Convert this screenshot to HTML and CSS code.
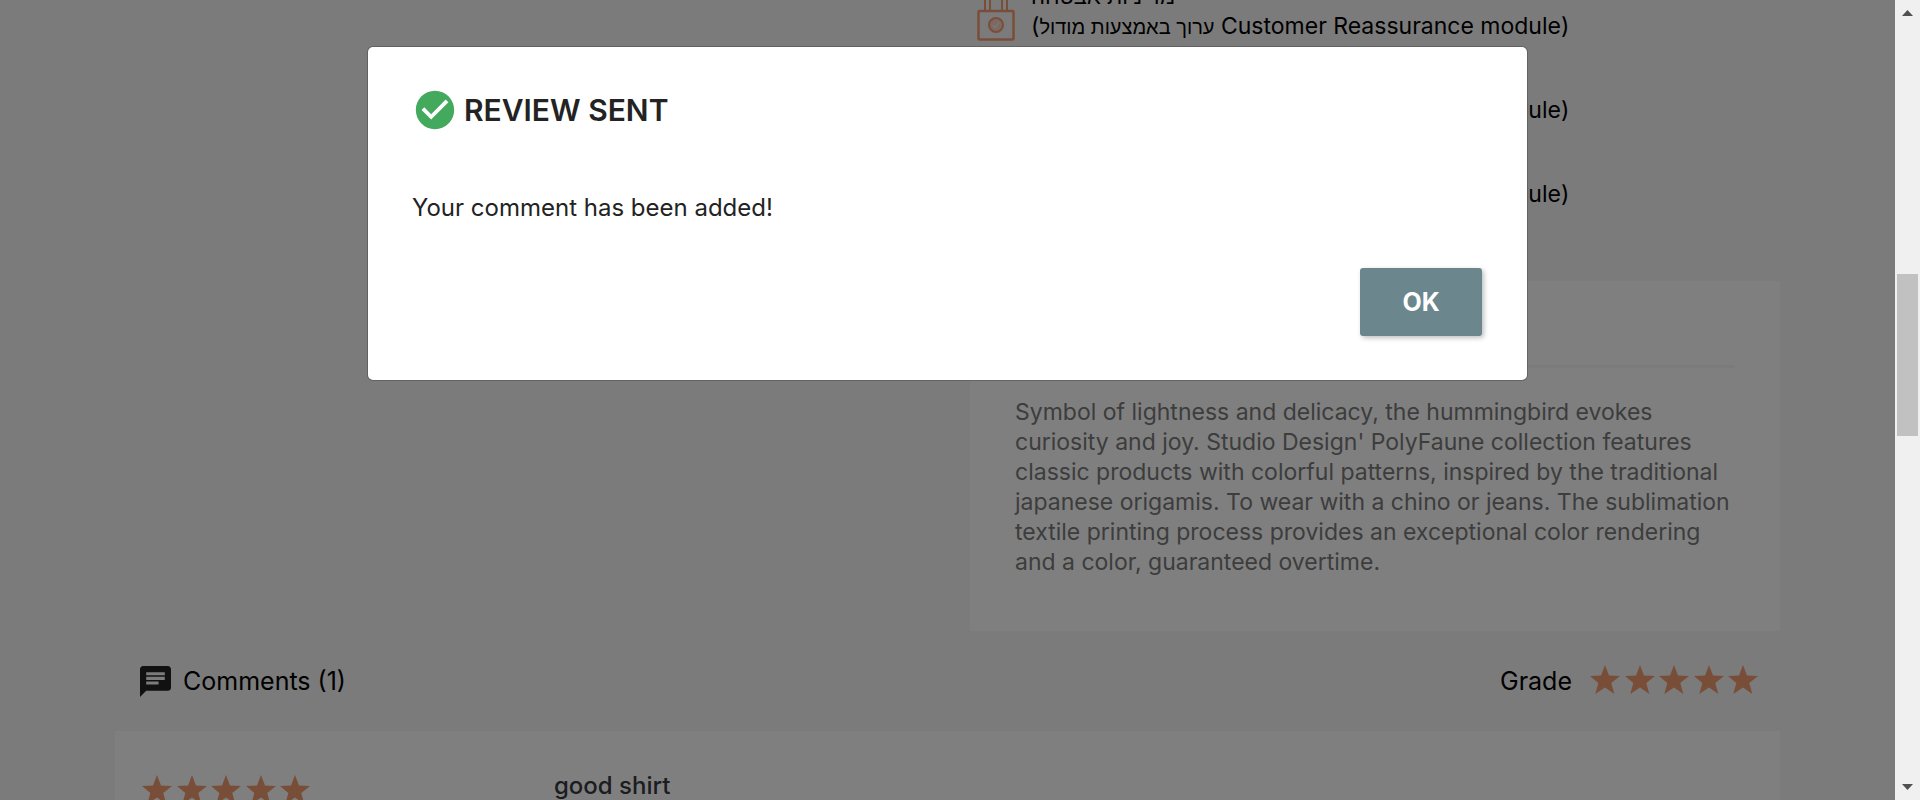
FILE: index.html
```html
<!DOCTYPE html>
<html lang="en">
<head>
<meta charset="utf-8">
<title>Product comments</title>
<link rel="stylesheet" href="styles.css">
</head>
<body>
<svg class="defs" aria-hidden="true">
  <symbol id="star" viewBox="0 0 30 29"><path d="M15 0l4 10.500 11 .6-8.700 7 3 10.900L15 22.600 5.300 29l3-10.900L0 11.100l11-.6z"/></symbol>
</svg>
<div class="window">
  <div class="view">
    <main class="container">
      <section class="product">
        <div class="details">
          <ul class="reassurance">
            <li class="reassurance-item">
              <svg class="lock" viewBox="0 0 38 60" aria-hidden="true"><path d="M8 29V16a11 11 0 0 1 22 0v13M13 29V17a6 6 0 0 1 12 0v12" fill="none" stroke="#f39d72" stroke-width="2"/><rect x="1.500" y="30" width="35" height="28.500" rx="1" fill="none" stroke="#f39d72" stroke-width="2.500"/><ellipse cx="19" cy="44" rx="7" ry="7" fill="#f8d3c2" stroke="#f39d72" stroke-width="2"/><path d="M16 44l2 3 4-6" fill="none" stroke="#fff" stroke-width="1"/></svg>
              <p><span class="he he-title">מדיניות אבטחה</span><br>(<span class="he">ערוך באמצעות מודול</span> Customer Reassurance module)</p>
            </li>
            <li class="reassurance-item">
              <span class="lock"></span>
              <p><span class="he he-title">מדיניות משלוח</span><br>(<span class="he">ערוך באמצעות מודול</span> Customer Reassurance module)</p>
            </li>
            <li class="reassurance-item">
              <span class="lock"></span>
              <p><span class="he he-title">מדיניות החזרה</span><br>(<span class="he">ערוך באמצעות מודול</span> Customer Reassurance module)</p>
            </li>
          </ul>
          <article class="card description">
            <h2 class="tab">Description</h2>
            <p>Symbol of lightness and delicacy, the hummingbird evokes<br>curiosity and joy. Studio Design' PolyFaune collection features<br>classic products with colorful patterns, inspired by the traditional<br>japanese origamis. To wear with a chino or jeans. The sublimation<br>textile printing process provides an exceptional color rendering<br>and a color, guaranteed overtime.</p>
          </article>
        </div>
      </section>
      <header class="comments-header">
        <div class="comments-title">
          <svg class="chat" viewBox="2 2 20 20" aria-hidden="true"><path d="M20 2H4c-1.100 0-2 .9-2 2v18l4-4h14c1.100 0 2-.9 2-2V4c0-1.100-.9-2-2-2zM6 9h12v2H6V9zm8 5H6v-2h8v2zm4-6H6V6h12v2z"/></svg>
          <span>Comments (1)</span>
        </div>
        <div class="grade">
          <span>Grade</span>
          <span class="stars"><svg><use href="#star"/></svg><svg><use href="#star"/></svg><svg><use href="#star"/></svg><svg><use href="#star"/></svg><svg><use href="#star"/></svg></span>
        </div>
      </header>
      <article class="card comment">
        <span class="stars"><svg><use href="#star"/></svg><svg><use href="#star"/></svg><svg><use href="#star"/></svg><svg><use href="#star"/></svg><svg><use href="#star"/></svg></span>
        <h3 class="comment-title">good shirt</h3>
      </article>
    </main>
    <div class="backdrop">
      <div class="modal" role="dialog" aria-modal="true" aria-labelledby="modal-title">
        <h2 class="modal-title" id="modal-title">
          <svg class="check" viewBox="0 0 24 24" aria-hidden="true"><path d="M12 2C6.480 2 2 6.480 2 12s4.480 10 10 10 10-4.480 10-10S17.520 2 12 2zm-2 15l-5-5 1.410-1.410L10 14.170l7.590-7.590L19 8l-9 9z"/></svg>
          REVIEW SENT
        </h2>
        <p class="modal-text">Your comment has been added!</p>
        <button class="ok" type="button">OK</button>
      </div>
    </div>
  </div>
  <div class="scrollbar" aria-hidden="true">
    <svg class="arrow" viewBox="0 0 11 6"><path d="M5.500 0L11 6H0z"/></svg>
    <div class="track"><div class="thumb"></div></div>
    <svg class="arrow" viewBox="0 0 11 6"><path d="M0 0h11L5.500 6z"/></svg>
  </div>
</div>
</body>
</html>
```
FILE: styles.css
```css
* { box-sizing: border-box; }
body {
  margin: 0;
  font: 400 23px/30px Inter, "Liberation Sans", sans-serif;
  color: #000;
}
h2, h3, p, ul { margin: 0; padding: 0; font: inherit; }
.defs { position: absolute; width: 0; height: 0; }
.window { display: grid; grid-template-columns: 1fr 25px; height: 100vh; overflow: hidden; }
.view { position: relative; overflow: hidden; background: #f6f6f6; }
.container { max-width: 1665px; margin: 0 auto; }

.product { display: grid; grid-template-columns: 855fr 810fr; }
.details { grid-column: 2; }
.reassurance {
  list-style: none;
  display: grid;
  gap: 24px;
  margin-top: -19px;
  margin-bottom: 72px;
  padding-left: 7px;
}
.reassurance-item { display: flex; gap: 16px; white-space: nowrap; }
.lock { width: 38px; height: 60px; flex: none; }
.he { font-size: 20px; line-height: 20px; }
.he-title { font-size: 22px; }
.card { background: #fff; }
.description { padding: 45px 45px 54px; color: #7a7a7a; }
.tab { height: 42px; margin-bottom: 29px; border-bottom: 3px solid #f6f6f6; }

.comments-header {
  display: flex;
  align-items: center;
  justify-content: space-between;
  height: 100px;
  padding: 0 22px 0 25px;
  font-size: 25px;
}
.comments-title, .grade { display: flex; }
.comments-title { align-items: center; gap: 12px; }
.grade { align-items: center; gap: 18px; }
.chat { width: 31px; height: 31px; fill: #232323; }
.stars { display: flex; justify-content: space-between; width: 168px; }
.stars svg { width: 30px; height: 29px; fill: #f39d72; }
.grade .stars { padding-bottom: 3px; }
.comment {
  display: grid;
  grid-template-columns: 412px 1fr;
  align-items: start;
  padding: 40px 27px;
}
.comment .stars { padding-top: 4px; }
.comment-title { font-size: 24px; font-weight: 500; color: #363a42; }

.backdrop {
  position: absolute;
  inset: 0;
  padding: 46px 20px;
  background: rgba(0, 0, 0, .5);
}
.modal {
  display: flex;
  flex-direction: column;
  max-width: 1161px;
  margin: 0 auto;
  padding: 40px 45px 44px 44px;
  background: #fff;
  background-clip: padding-box;
  border: 1px solid rgba(0, 0, 0, .2);
  border-radius: 6px;
  color: #232323;
}
.modal-title {
  display: flex;
  align-items: center;
  gap: 6px;
  margin-bottom: 60px;
  font-size: 30px;
  font-weight: 600;
  line-height: 46px;
}
.check { width: 46px; height: 46px; fill: #43a95d; }
.modal-text { margin-bottom: 45px; font-size: 24px; }
.ok {
  align-self: flex-end;
  width: 122px;
  height: 68px;
  border: 0;
  border-radius: 3px;
  background: #6c868e;
  box-shadow: 2px 2px 5px rgba(0, 0, 0, .25);
  color: #fff;
  font: inherit;
  font-size: 25px;
  font-weight: 700;
}

.scrollbar {
  display: flex;
  flex-direction: column;
  align-items: center;
  padding: 10px 2px 10px;
  background: #f0f0f0;
}
.arrow { width: 11px; height: 6px; fill: #505050; }
.track { flex: 1; align-self: stretch; padding-top: 258px; }
.thumb { height: 162px; background: #c1c1c1; }
```
